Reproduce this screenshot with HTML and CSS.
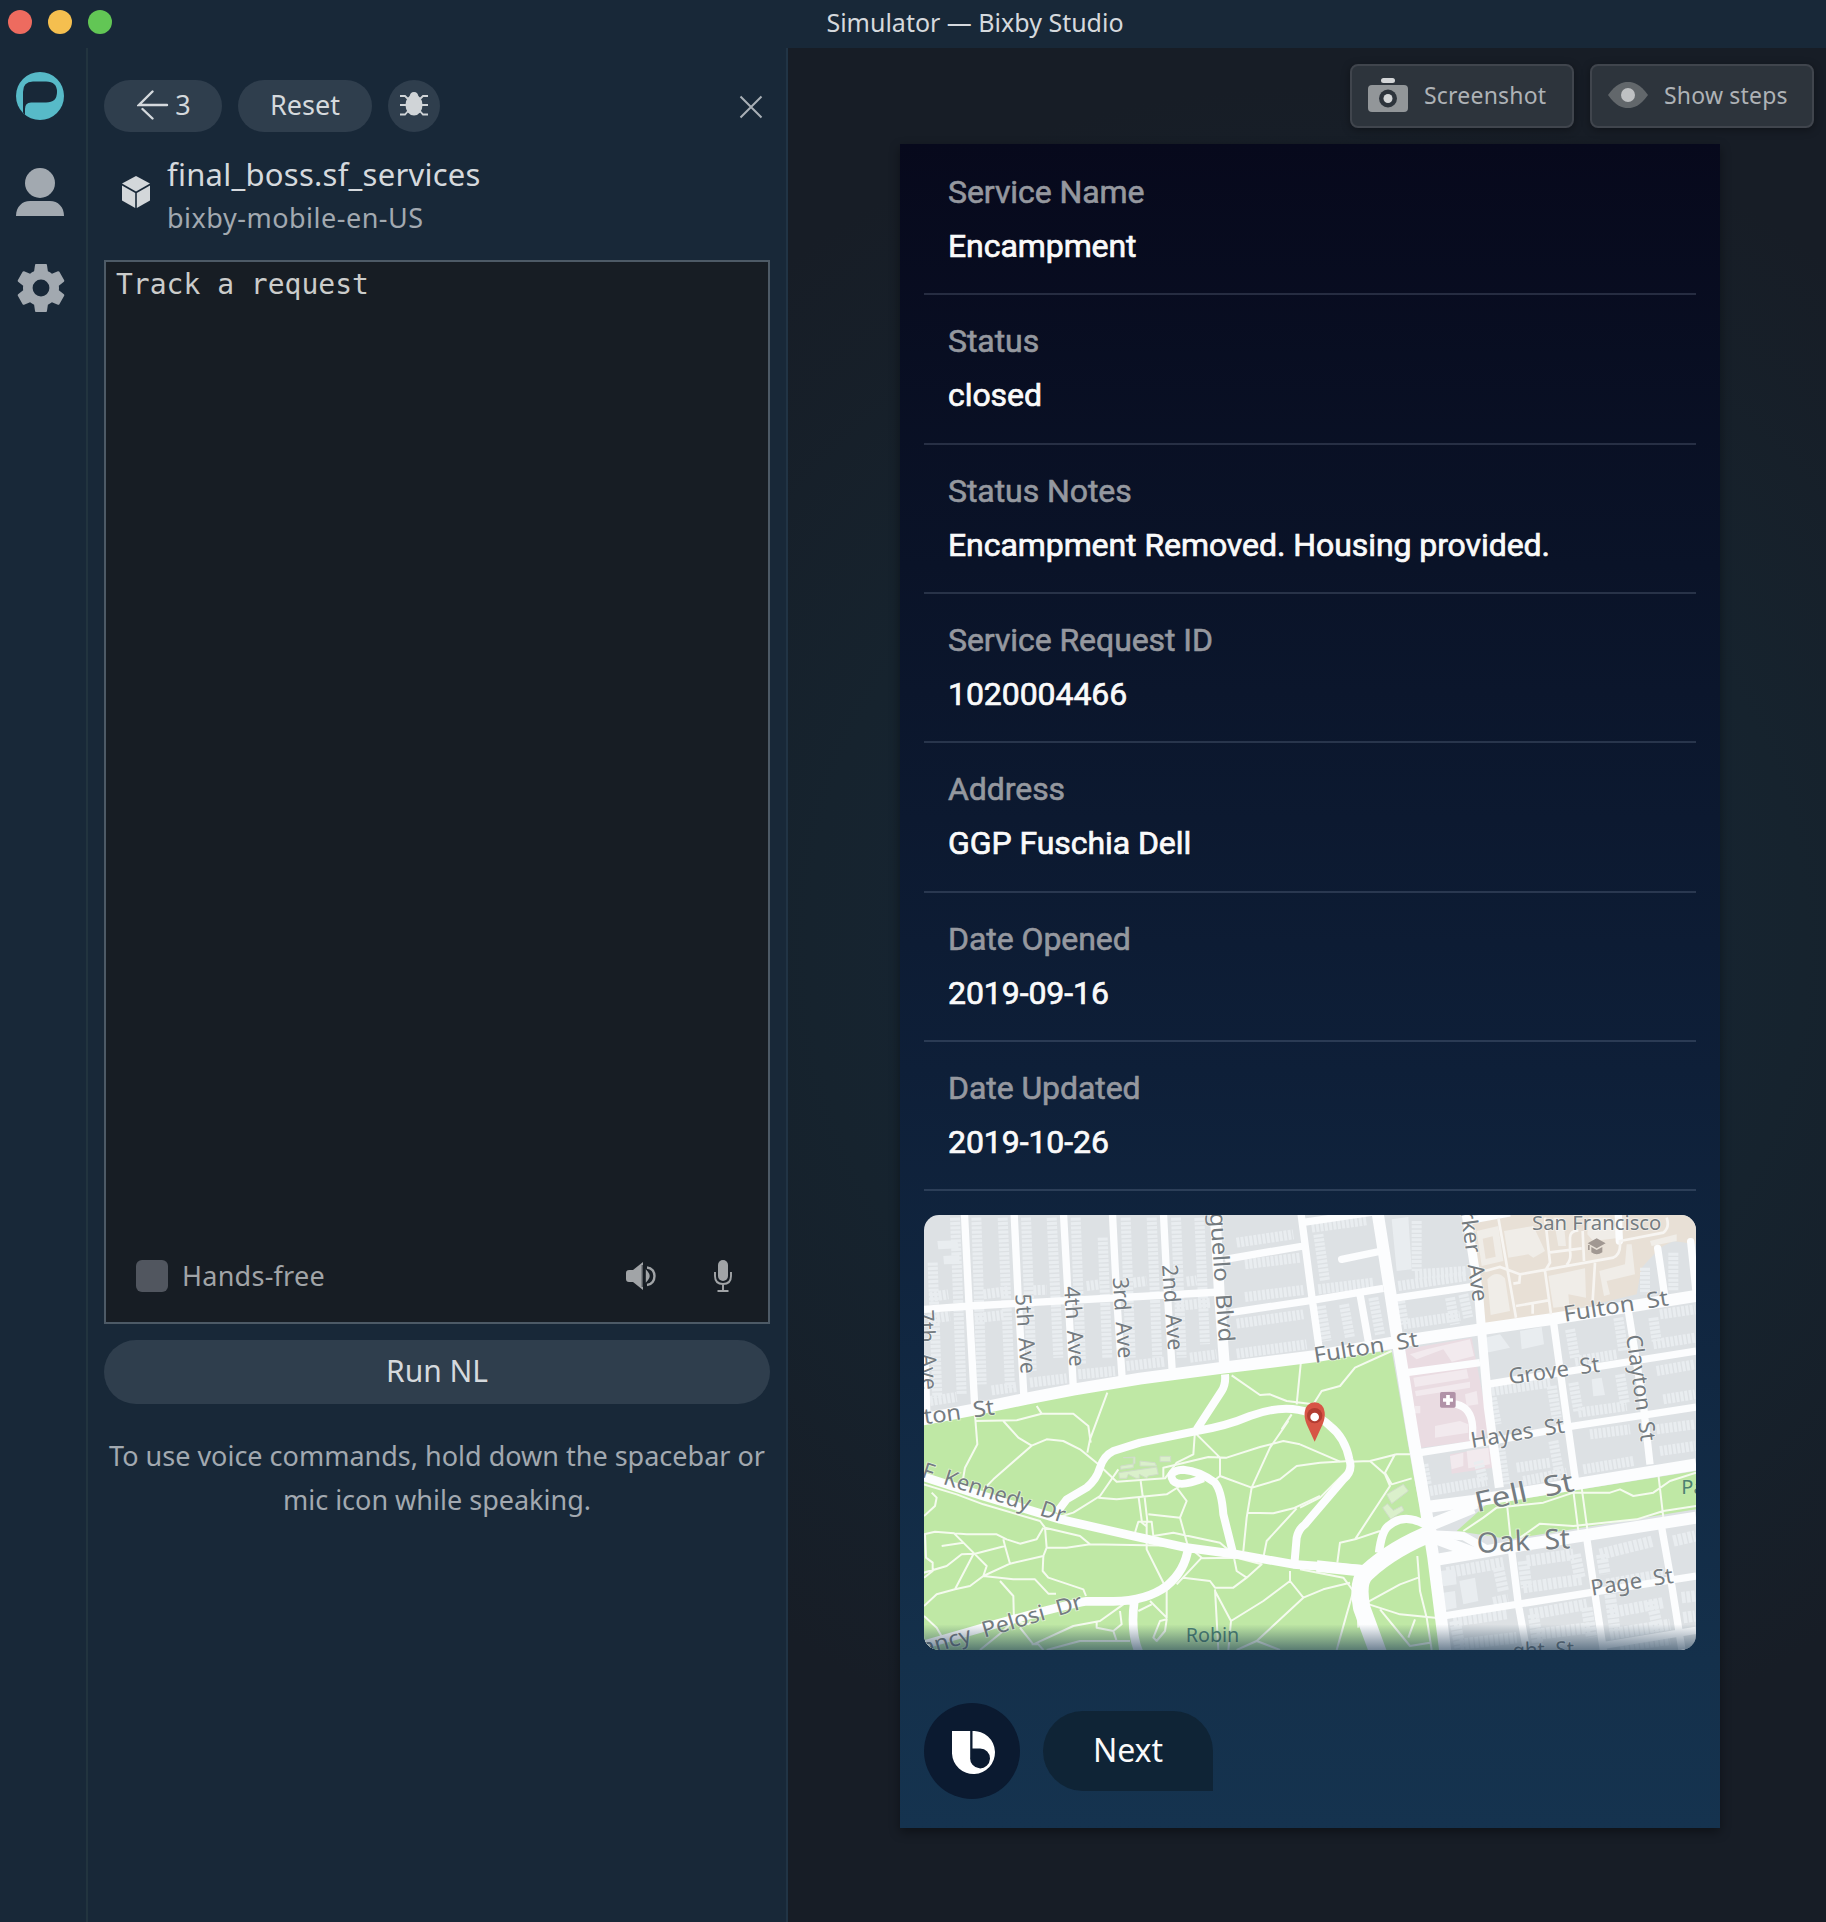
FILE: index.html
```html
<!DOCTYPE html>
<html lang="en">
<head>
<meta charset="utf-8">
<title>Simulator — Bixby Studio</title>
<link rel="stylesheet" href="styles.css">
</head>
<body>
<header class="titlebar">
  <div class="lights"><i class="light red"></i><i class="light yellow"></i><i class="light green"></i></div>
  <h1 class="window-title">Simulator — Bixby Studio</h1>
</header>
<main class="workspace">
  <nav class="rail">
    <svg class="rail-icon" viewBox="0 0 48 48"><circle cx="24" cy="24" r="24" fill="#57bac8"/><path d="M7 40.500V20Q7 9.500 17 9.500H30Q41 9.500 41 20Q41 30.500 30 30.500H15Q9 30.500 9 37V43Z" fill="#182838"/></svg>
    <svg class="rail-icon" viewBox="0 0 48 48"><circle cx="24" cy="15" r="15" fill="#a2a9b0"/><path d="M0 48C0 39 6 33 14 33H34C42 33 48 39 48 48Z" fill="#a2a9b0"/></svg>
    <svg class="rail-icon gear" viewBox="2 2 20 20"><path fill="#a2a9b0" d="M19.430 12.980c.04-.32.07-.64.07-.98s-.03-.66-.07-.98l2.110-1.650c.19-.15.24-.42.12-.64l-2-3.460c-.12-.22-.39-.3-.61-.22l-2.490 1c-.52-.4-1.080-.73-1.690-.98l-.38-2.650C14.460 2.180 14.250 2 14 2h-4c-.25 0-.46.18-.49.42l-.38 2.650c-.61.25-1.170.59-1.690.98l-2.490-1c-.23-.09-.49 0-.61.22l-2 3.460c-.13.22-.07.49.12.64l2.110 1.650c-.04.32-.07.65-.07.98s.03.66.07.98l-2.110 1.650c-.19.15-.24.42-.12.64l2 3.460c.12.22.39.3.61.22l2.490-1c.52.4 1.080.73 1.690.98l.38 2.650c.03.24.24.42.49.42h4c.25 0 .46-.18.49-.42l.38-2.650c.61-.25 1.170-.59 1.690-.98l2.490 1c.23.09.49 0 .61-.22l2-3.460c.12-.22.07-.49-.12-.64zM12 15.500A3.500 3.500 0 1 1 12 8.500a3.500 3.500 0 0 1 0 7z"/></svg>
  </nav>

  <section class="panel">
    <div class="toolbar">
      <button class="pill back"><svg width="32" height="30" viewBox="0 0 32 30" fill="none" stroke="#d5d9dd" stroke-width="2.400" stroke-linecap="round"><path d="M30 15H2L15.500 1.500M5.500 19L15.500 28.500"/></svg><span>3</span></button>
      <button class="pill reset"><span>Reset</span></button>
      <button class="pill bug"><svg width="28" height="26" viewBox="0 0 28 26"><path d="M0 5H5L9 9M0 14H9M0 23.500H5L9 19M28 5H23L19 9M28 14H19M28 23.500H23L19 19" fill="none" stroke="#d0d4d7" stroke-width="1.800"/><ellipse cx="14" cy="14" rx="8.500" ry="10.500" fill="#d0d4d7"/><path d="M9.500 6Q10 1 14 1T18.500 6Z" fill="#d0d4d7"/></svg></button>
      <button class="close"><svg width="24" height="24" viewBox="0 0 24 24" stroke="#a9b0b6" stroke-width="2"><path d="M1.500 1.500L22.500 22.500M22.500 1.500L1.500 22.500"/></svg></button>
    </div>
    <div class="capsule">
      <svg width="28" height="32" viewBox="0 0 28 32" fill="#d3d7da"><path d="M14 0L28 7.500L14 15.500L0 7.500Z"/><path d="M0 9.500L13.200 17V32L0 24.500Z"/><path d="M28 9.500L14.800 17V32L28 24.500Z"/></svg>
      <div>
        <div class="capsule-name">final_boss.sf_services</div>
        <div class="capsule-target">bixby-mobile-en-US</div>
      </div>
    </div>
    <div class="utterance">
      <div class="utterance-text">Track a request</div>
      <div class="utterance-bar">
        <i class="checkbox"></i><span class="hands">Hands-free</span>
        <svg class="speaker" width="31" height="28" viewBox="0 0 31 28"><path d="M0 11Q0 8 3 8H7L17 0V28L7 20H3Q0 20 0 17Z" fill="#a1a4a7"/><path d="M16.200 3V25" stroke="#33383e"/><path d="M21 10.500Q24 14 21 17.500ZM21 5.500C31 6 31 22 21 23" fill="none" stroke="#a1a4a7" stroke-width="2.400"/></svg>
        <svg class="mic" width="18" height="32" viewBox="0 0 18 32"><rect x="4" width="10" height="21" rx="5" fill="#a1a4a7"/><path d="M1 12V16Q1 24 9 24T17 16V12M9 24V31M3.500 31H14.500" fill="none" stroke="#a1a4a7" stroke-width="1.900"/></svg>
      </div>
    </div>
    <button class="pill run"><span>Run NL</span></button>
    <p class="hint">To use voice commands, hold down the spacebar or<br>mic icon while speaking.</p>
  </section>

  <section class="stage">
    <div class="actions">
      <button class="action"><svg width="40" height="34" viewBox="0 0 40 34"><rect x="13" y="0" width="14" height="5" rx="2.500" fill="#d3d5d7"/><rect y="7" width="40" height="27" rx="4" fill="#929699"/><circle cx="20" cy="20.500" r="9" fill="#2d343c"/><circle cx="20" cy="20.500" r="4.500" fill="#d3d5d7"/></svg><span>Screenshot</span></button>
      <button class="action"><svg class="eye" width="40" height="34" viewBox="0 0 40 34"><path d="M0 17C8 6 14 4 20 4S32 6 40 17C32 28 26 30 20 30S8 28 0 17Z" fill="#62676b"/><circle cx="20" cy="17" r="7" fill="#bfc1c3"/></svg><span>Show steps</span></button>
    </div>
    <article class="device">
      <dl class="rows">
        <div class="row"><dt>Service Name</dt><dd>Encampment</dd></div>
        <div class="row"><dt>Status</dt><dd>closed</dd></div>
        <div class="row"><dt>Status Notes</dt><dd>Encampment Removed. Housing provided.</dd></div>
        <div class="row"><dt>Service Request ID</dt><dd>1020004466</dd></div>
        <div class="row"><dt>Address</dt><dd>GGP Fuschia Dell</dd></div>
        <div class="row"><dt>Date Opened</dt><dd>2019-09-16</dd></div>
        <div class="row"><dt>Date Updated</dt><dd>2019-10-26</dd></div>
      </dl>
      <svg class="map" viewBox="72 72 2316 1305" preserveAspectRatio="none">
        <defs><linearGradient id="fade" x1="0" y1="0" x2="0" y2="1"><stop offset="0" stop-color="#15334f" stop-opacity="0"/><stop offset="1" stop-color="#15334f" stop-opacity=".6"/></linearGradient></defs>
        <rect x="72" y="72" width="2316" height="1305" fill="#dde1e4"/>
        <!-- campus and hospital grounds -->
        <path fill="#e8e0d6" d="M1700 95L1830 72H2388V160L2320 150L2280 170L2225 230L2210 310L1960 370L1755 400Z"/>
        <path fill="#f0ede8" d="M1730 120L1795 105L1810 210L1745 225ZM1812 120L1900 105L1935 180L1900 200L1885 190L1825 200ZM1960 80L1990 80L1998 165L1975 165ZM2065 80H2130L2160 140L2080 150L2062 130ZM1762 265Q1790 235 1815 262L1830 360L1772 372ZM1945 255L2055 232L2058 320L2005 310L2008 345L1960 350ZM2098 240L2175 220L2180 160L2195 160L2205 250L2120 270L2130 310L2112 315ZM2250 150L2330 130V150L2255 165Z"/>
        <path fill="#e8e0d6" d="M1748 143L1778 136L1787 197L1757 204Z"/>
        <path fill="#eadce2" d="M1515 475L1715 440L1765 700L1755 745L1555 772ZM1650 790L1770 770L1778 830L1655 848Z"/>
        <path fill="#f2eaee" d="M1580 475L1710 445L1722 495L1655 512L1630 475L1550 505L1530 490ZM1540 560L1700 535L1706 562L1545 588ZM1545 600L1710 572V590L1548 616ZM1695 610L1730 600L1735 640L1700 645ZM1605 705L1680 690L1705 700V725L1605 740ZM1545 645h16v22h-18ZM1650 795L1690 785V825L1655 835ZM1700 780L1765 770L1770 820L1705 832Z"/>
        <!-- houses -->
        <g fill="none" stroke="#e9edf0" stroke-width="30" stroke-dasharray="9 4">
          <path d="M98 215L112 620M165 80L185 610M229 80L245 580M308 80L330 590M378 80L395 540M455 80L475 500M527 80L543 520M608 140L622 500M677 80L692 500M755 80L772 500M828 80L845 500M898 80L915 460"/>
          <path d="M90 318L145 310M250 310L325 300M400 298L440 296M560 285L600 280M700 275L740 270M860 272L890 268M85 385L150 375M225 382L310 372M830 345L930 335M390 575L500 562M535 550L645 540M680 525L795 512M870 500L950 490M275 598L350 588M90 630L170 618"/>
          <path d="M1010 155L1180 130M1035 220L1200 200M1035 318L1210 297M1010 398L1210 370M1010 488L1220 460M1235 110L1400 88M1255 295L1420 275M1495 285L1700 255M1510 400L1680 375M1255 130L1275 270M1262 345L1280 450M1332 340L1350 440M1420 320L1440 430M1500 330L1512 400M1650 320L1665 400M1690 310L1705 380"/>
          <path d="M1775 600L1950 575M2025 510L2150 490M2280 370L2385 355M2260 460L2385 440M2270 540L2385 520M2290 625L2385 610M2035 665L2180 645M1775 620L1790 700M1955 585L1970 680M2010 415L2025 500M2155 380L2170 480M2020 575L2035 660M2160 550L2175 640M2260 380L2270 450"/>
          <path d="M1590 900L1760 870M1735 810L1750 870M1570 820L1580 880M1800 770L1815 880M1960 750L1980 860M1850 830L1950 815M2070 730L2190 715M2050 835L2200 810M2270 715L2385 700M2280 780L2385 765M1870 870L2000 845"/>
          <path d="M2320 185V300M2235 230V310M1550 90V240M1545 250L1700 240"/>
        </g>
        <g fill="none" stroke="#e9edf0" stroke-width="34" stroke-dasharray="11 4">
          <path d="M1640 1145L1810 1115M1780 1235L1825 1225M1880 1110L2020 1090M1870 1190L2045 1165M1660 1290L1820 1268M1890 1270L2060 1240M2100 1090L2260 1050M2120 1180L2290 1150M2320 1050L2385 1035M2130 1265L2290 1235M2130 1330L2310 1300M2345 1220L2385 1215M2350 1280L2385 1275M1680 1360L1850 1340M1910 1330L2070 1310M2160 1365L2310 1345"/>
          <path d="M1795 1130L1810 1200M1870 1110L1880 1190M2025 1090L2040 1160M2105 1090L2115 1150M1665 1290L1680 1370M1900 1270L1915 1370M2060 1250L2075 1340M2130 1210L2145 1320M2255 1230L2275 1320"/>
        </g>
        <path fill="#e9edf0" d="M112 150L172 148L176 172L115 175ZM130 195L178 192V218L132 220ZM1475 85L1525 78L1535 235L1490 240ZM1755 440L1800 430L1830 470L1760 485ZM1860 420L1925 408L1932 460L1865 475ZM2075 565L2105 560L2115 612L2080 616ZM1620 1140L1665 1135L1670 1180L1630 1186ZM1678 1170L1725 1160L1735 1230L1690 1240ZM1630 1205L1665 1200L1670 1250L1635 1258Z"/>
        <!-- parkland -->
        <path fill="#bfe8a5" d="M72 695L225 665L520 605L970 545L1475 478L1540 850L1590 1100L1640 1377H72ZM1670 1020L1760 940L2388 840V955L1830 1045Z"/>
        <path fill="#daf0cb" stroke="#cfdcc8" stroke-width="3" d="M670 800L705 798V818L662 825V835L700 830V800ZM656 845L770 828L775 850L745 855L740 862L718 850V862H708L685 850L680 862H658ZM720 810L765 815L770 825H720ZM780 796H812V812H780ZM1460 910L1510 880L1525 900L1475 938ZM1448 950L1462 938L1480 958L1505 945L1512 958L1472 985Z"/>
        <!-- footpaths -->
        <g fill="none" stroke="#f5fbef" stroke-width="6" stroke-linejoin="round">
          <path d="M225 672L232 760L195 830L188 870M225 690L350 688L425 668H520L565 705L572 755M410 645L425 668M310 690L355 740L395 764L440 745L490 750L540 775L595 820L650 872L795 862L830 815L880 790L885 720M395 764L280 865L250 895M622 605L570 745L562 785"/>
          <path d="M655 835L600 915L520 965L470 980M595 920L650 925L800 910L840 885M722 870L728 915M716 920L726 995L738 1005L742 990L734 920M740 1000V1075L795 1185M890 730L960 800V855L940 870M790 860V830L925 798L980 800L1080 768L1150 750L1200 760M960 855L1055 890L1140 865L1190 825L1260 815L1350 810M1165 690L1110 770L1055 890L1040 980L1030 1080M1040 965L1120 967L1180 952L1260 915M1190 952L1100 1050L1090 1100"/>
          <path d="M995 553L1080 612L1110 610L1160 630L1240 640M1203 510L1190 640M1475 480L1365 530L1320 585L1265 600L1240 640M1175 670L1145 715M1350 812L1410 810L1490 790H1530M1200 760L1320 812M1410 810L1455 850L1470 885L1365 1045L1320 1055L1312 1115M1535 862L1475 880L1455 845L1485 790M1340 840L1260 920L1200 950M1365 1045L1440 1020"/>
          <path d="M72 880L170 910L250 940L420 990L435 1010L540 1035L570 1060L860 1065M72 975L105 945L110 920L95 905M72 1030L105 1022L200 1030H290L320 1045L360 1058L410 1045L430 1010M435 1010L440 1070H500L570 1060M160 1025L220 1085L260 1125L250 1155L340 1165H405L445 1208H468M125 1065L190 1055M72 1145L140 1125L185 1090L225 1088L315 1065L310 1045M315 1065L330 1118L430 1095L440 1070M330 1118L250 1155L210 1185L165 1195M220 1090L165 1195L110 1210L72 1245M75 1030L78 1100L98 1115V1140L72 1160"/>
          <path d="M430 1095L428 1140L445 1160L550 1195L558 1215M300 1170L340 1215L342 1290M72 1275L110 1310L130 1345M240 1377L310 1320L340 1290L385 1300L395 1290M360 1310L400 1360L520 1305L600 1290L670 1240M395 1360H415L430 1377M440 1377L540 1350H690M590 1290V1310L640 1320L665 1300L660 1260M640 1320L650 1350M705 1025L715 992H755L760 1035L820 1025L960 1055L1000 1090M745 970L840 980L865 1070M830 890L860 930L840 980M870 1070L905 1100L830 1180M900 1102L1010 1100L1085 1120L1040 1160L1000 1190H945L930 1170L850 1160M750 1230L800 1280V1190M715 1260L755 1240M760 1340L780 1290L800 1285L795 1320L770 1350ZM945 1195L955 1377M945 1200L993 1290L985 1377M993 1290L1090 1230L1170 1170L1210 1220L1070 1350L1010 1377M1070 1350L1140 1377M1170 1140V1170M1210 1220L1270 1195L1350 1175M1000 1090L1010 1140L1040 1160"/>
          <path d="M1200 1135L1330 1160L1360 1200L1340 1270L1310 1377M1370 1220L1375 1310M1400 1235L1500 1180L1555 1160M1552 1095L1560 1200L1580 1280L1595 1377M1400 1238L1500 1270L1620 1282M1440 1255L1530 1365L1590 1355M1525 1340L1545 1285M1690 1020L1750 980L1790 950L1930 935L2020 905L2130 905L2160 895L2200 915L2260 905L2310 870L2388 845M1860 1040L1920 998L2020 1005L2210 985L2290 960L2388 945M1820 930L1832 1045M2020 900L2035 1020M2045 890L2062 1015M2275 850L2290 980"/>
        </g>
        <!-- streets -->
        <g fill="none" stroke="#fcfdfe" stroke-width="22" stroke-linejoin="round">
          <path d="M193 60L207 340L225 660M342 60L355 330L372 620M490 60L505 330L520 590M637 60L650 320L667 570M790 60L803 320L817 545M72 355L210 345L960 303M975 205L1210 165M990 365L1235 328L1450 292M1202 60L1236 320L1260 490M1205 95L1440 60M1380 310L1405 450M1480 322L1730 285M1700 90L1830 66"/>
          <path d="M1520 545L1740 515M1760 580L2388 480M1560 785L1780 750L2020 705L2388 648M1960 390L2000 680L2028 880M2185 360L2230 640L2250 820M1835 1080L1855 1240L1882 1390M2060 1040L2085 1210L2112 1390M2285 1010L2310 1150L2348 1390M1630 1275L2070 1205L2388 1155M2100 1365L2388 1318M75 500L80 660"/>
          <path stroke-linecap="round" d="M1325 205L1445 180M2273 172L2295 320M2372 152L2388 300M2155 72L2158 150M1670 640Q1715 650 1718 710V740"/>
          <path stroke-width="32" d="M945 60L958 310L975 545"/>
          <path stroke-width="27" d="M1697 60L1735 300L1745 420L1765 650L1798 890"/>
          <path stroke-width="36" d="M60 687L225 655L380 623L520 596L720 563L970 530L1250 495L1490 453L1740 415L1950 385L2388 315M1580 948L1720 930L1890 902L2388 820M1600 1108L1850 1065L2388 980M1432 60L1470 300L1490 430L1540 740L1575 940L1600 1100L1637 1390"/>
          <path d="M975 550Q978 580 965 600L890 715M1183 1120L1190 1040Q1195 1015 1215 1000L1330 865Q1360 840 1348 805Q1335 740 1290 705Q1200 620 1050 675Q980 705 890 720L720 755L640 780Q610 795 600 830T560 890L500 925L470 965M1000 1090L970 970Q965 900 945 875Q900 840 850 836Q800 840 820 870Q840 890 910 862" stroke-width="24"/>
          <path stroke-width="26" d="M72 858L250 915L480 985L700 1035L860 1070L1010 1090L1180 1120L1390 1135M865 1070Q855 1140 800 1185Q740 1230 640 1231H560Q500 1240 250 1310L60 1365M703 1230Q690 1330 720 1390"/>
          <path stroke-width="25" d="M1437 1085Q1445 1020 1465 1005Q1510 965 1575 1000M1580 1000L1730 940M1590 1030L1690 1035L1760 1075"/>
          <path stroke-width="52" d="M1440 1400L1385 1250Q1370 1170 1400 1145Q1480 1070 1610 1020"/>
          <path stroke-width="34" d="M1250 1125L1390 1140L1480 1090M1600 1000L1720 950M1600 1040L1720 1085"/>
        </g>
        <g fill="none" stroke="#f7f5f2" stroke-width="8">
          <path d="M1795 80L1848 380M1935 80L1950 215L1935 240L1953 370M1755 240L1800 228L1860 250L1858 275L1840 278M1860 250L2140 200Q2160 190 2160 165V150L2290 125Q2310 110 2300 80M1945 185L2045 172M2048 120L2052 210M2000 222Q2015 205 2010 180V140Q2010 120 2035 118M2085 215L2078 330M1848 345L1945 328M1898 340V368"/>
        </g>
        <!-- place symbols -->
        <path fill="#a19892" d="M2063 157L2090 142L2117 157L2090 172ZM2074 168L2090 177L2107 168V184Q2090 196 2074 184ZM2064 162h5v15h-5Z"/>
        <rect x="1620" y="603" width="47" height="47" rx="5" fill="#b193a8"/>
        <path d="M1644 612V642M1629 627H1659" stroke="#fff" stroke-width="11"/>
        <!-- labels -->
        <g class="map-label" font-size="66">
          <text transform="translate(346 310) rotate(86)" textLength="240" lengthAdjust="spacingAndGlyphs">5th &#160;Ave</text>
          <text transform="translate(492 287) rotate(86)" textLength="242" lengthAdjust="spacingAndGlyphs">4th &#160;Ave</text>
          <text transform="translate(638 260) rotate(86)" textLength="244" lengthAdjust="spacingAndGlyphs">3rd &#160;Ave</text>
          <text transform="translate(786 222) rotate(86)" textLength="258" lengthAdjust="spacingAndGlyphs">2nd &#160;Ave</text>
          <text transform="translate(54 358) rotate(87)" textLength="240" lengthAdjust="spacingAndGlyphs">7th &#160;Ave</text>
          <text transform="translate(930 66) rotate(86)" textLength="390" lengthAdjust="spacingAndGlyphs">guello &#160;Blvd</text>
          <text transform="translate(1681 62) rotate(82)" textLength="275" lengthAdjust="spacingAndGlyphs">rker &#160;Ave</text>
          <text transform="translate(2178 434) rotate(82)" textLength="322" lengthAdjust="spacingAndGlyphs">Clayton &#160;St</text>
          <text transform="translate(74 700) rotate(-8)" textLength="214" lengthAdjust="spacingAndGlyphs">ton &#160;St</text>
          <text transform="translate(1245 516) rotate(-9)" textLength="316" lengthAdjust="spacingAndGlyphs">Fulton &#160;St</text>
          <text transform="translate(1994 392) rotate(-9)" textLength="318" lengthAdjust="spacingAndGlyphs">Fulton &#160;St</text>
          <text transform="translate(1829 580) rotate(-8)" textLength="275" lengthAdjust="spacingAndGlyphs">Grove &#160;St</text>
          <text transform="translate(1716 771) rotate(-9.500)" textLength="284" lengthAdjust="spacingAndGlyphs">Hayes &#160;St</text>
          <text transform="translate(2076 1214) rotate(-9)" textLength="249" lengthAdjust="spacingAndGlyphs">Page &#160;St</text>
          <text transform="translate(1731 964) rotate(-12.500)" font-size="84" textLength="302" lengthAdjust="spacingAndGlyphs">Fell &#160;St</text>
          <text transform="translate(1732 1086) rotate(-3)" font-size="84" textLength="280" lengthAdjust="spacingAndGlyphs">Oak &#160;St</text>
          <text transform="translate(62 857) rotate(18)" textLength="448" lengthAdjust="spacingAndGlyphs">F &#160;Kennedy &#160;Dr</text>
          <text transform="translate(72 1394) rotate(-16.500)" textLength="500" lengthAdjust="spacingAndGlyphs">ancy &#160;Pelosi &#160;Dr</text>
          <text transform="translate(1838 1403) rotate(-2)" textLength="185" lengthAdjust="spacingAndGlyphs">ght &#160;St</text>
          <text x="1896" y="118" font-size="60" textLength="388" lengthAdjust="spacingAndGlyphs">San Francisco</text>
        </g>
        <g class="map-label park" font-size="60">
          <text x="857" y="1352" textLength="161" lengthAdjust="spacingAndGlyphs">Robin</text>
          <text x="2344" y="908">Pa</text>
        </g>
        <rect x="72" y="1300" width="2316" height="77" fill="url(#fade)"/>
        <path fill="#d75546" d="M1244 752L1220 700Q1212 680 1214 664A30 30 0 0 1 1274 664Q1276 680 1268 700Z"/>
        <circle cx="1244" cy="674" r="23" fill="#b23c31"/><circle cx="1244" cy="678" r="13" fill="#fff"/>
      </svg>
      <footer class="device-foot">
        <span class="bixby"><svg width="43" height="43" viewBox="0 0 130 130"><path fill="#fff" fill-rule="evenodd" d="M0 0H55V80A30 30 0 1 0 85 53H62V0A65 65 0 1 1 0 68Z"/></svg></span>
        <button class="next">Next</button>
      </footer>
    </article>
  </section>
</main>
</body>
</html>
```
FILE: styles.css
```css
* { box-sizing: border-box; }
body {
  margin: 0;
  width: 1826px;
  height: 1922px;
  display: flex;
  flex-direction: column;
  background: #182838;
  color: #d5d9dd;
  font-family: "Noto Sans", "Open Sans", sans-serif;
  overflow: hidden;
}
button { border: 0; padding: 0; font: inherit; color: inherit; background: none; }
svg { display: block; flex: none; }
button, .window-title, .hint, .hands { white-space: nowrap; }

.titlebar {
  height: 48px;
  flex: none;
  display: grid;
  grid-template-columns: 1fr auto 1fr;
  align-items: center;
  padding: 0 8px 4px;
}
.lights { display: flex; gap: 16px; }
.light { width: 24px; height: 24px; border-radius: 50%; }
.red { background: #ed6b5f; }
.yellow { background: #f5bf4f; }
.green { background: #62c655; }
.window-title {
  grid-column: 2;
  margin: 0 -44px 0 80px;
  font-size: 25px;
  font-weight: 400;
  line-height: 44px;
}

.workspace { flex: 1; display: flex; min-height: 0; }
.rail {
  width: 88px;
  flex: none;
  display: flex;
  flex-direction: column;
  gap: 48px;
  padding: 24px 0 0 16px;
  border-right: 2px solid #22343f;
}
.rail-icon { width: 48px; height: 48px; }
.gear { margin-left: 1px; }

.panel {
  width: 700px;
  flex: none;
  display: flex;
  flex-direction: column;
  padding: 32px 16px 0;
  border-right: 2px solid #213445;
}
.toolbar { display: flex; gap: 16px; height: 52px; }
.pill {
  display: flex;
  align-items: center;
  justify-content: center;
  border-radius: 32px;
  background: #2f3e4d;
  font-size: 27px;
}
.back, .reset { padding-bottom: 3px; }
.back { width: 118px; gap: 6px; padding-left: 2px; }
.reset { width: 134px; }
.bug { width: 52px; padding-bottom: 5px; }
.close { margin: 1px 7px 0 auto; }
.capsule {
  display: flex;
  align-items: center;
  gap: 17px;
  height: 88px;
  margin: 20px 0;
  padding-left: 18px;
}
.capsule > svg { margin-top: -8px; }
.capsule-name { font-size: 31px; line-height: 44px; letter-spacing: .25px; }
.capsule-target { font-size: 27px; line-height: 44px; letter-spacing: .5px; color: #a2a9b0; }

.utterance {
  height: 1064px;
  display: flex;
  flex-direction: column;
  justify-content: space-between;
  border: 2px solid #4d5a66;
  background: #171d24;
}
.utterance-text {
  padding: 6px 10px;
  font: 28px/34px "DejaVu Sans Mono", monospace;
  color: #cbcccb;
}
.utterance-bar {
  display: flex;
  align-items: center;
  padding: 0 36px 30px 30px;
  font-size: 27px;
  line-height: 32px;
  color: #a1a4a7;
}
.checkbox { width: 32px; height: 32px; border-radius: 6px; background: #51565f; }
.hands { margin-left: 14px; letter-spacing: .25px; }
.speaker { margin-left: auto; }
.mic { margin-left: 57px; }
.run { height: 64px; margin-top: 16px; font-size: 30px; padding-bottom: 3px; }
.hint {
  margin: 30px -10px 0;
  font-size: 27px;
  line-height: 44px;
  text-align: center;
  color: #a2a9b0;
}

.stage {
  flex: 1;
  display: flex;
  flex-direction: column;
  padding: 16px 12px 0 112px;
  background: radial-gradient(circle at 50% 48%, #17283a 0, #16232e 45%, #171d26 78%);
}
.actions { display: flex; justify-content: flex-end; gap: 16px; }
.action {
  width: 224px;
  height: 64px;
  display: flex;
  align-items: center;
  gap: 16px;
  padding: 0 0 2px 16px;
  border: 2px solid #40454d;
  border-radius: 8px;
  background: #2d343c;
  box-shadow: 0 2px 8px rgba(0, 0, 0, .35);
  color: #aeb2b6;
  font-size: 23px;
  letter-spacing: .2px;
}
.device {
  width: 820px;
  height: 1684px;
  margin-top: 16px;
  padding: 2px 24px 0;
  background: linear-gradient(#07091c 0, #0a1328 25%, #0e1f38 55%, #14304b 90%, #15334f 100%);
  box-shadow: 0 4px 10px rgba(0, 0, 0, .4);
}
.rows { margin: 0; font-family: Roboto, sans-serif; font-size: 32px; line-height: 54px; }
.row { height: 149.330px; padding: 19px 24px 0; border-bottom: 2px solid rgba(160, 175, 200, .2); white-space: nowrap; }
.row dt { color: #95989f; letter-spacing: -.07px; -webkit-text-stroke: .6px #95989f; }
.row dd { margin: 0; color: #fafafa; letter-spacing: -.07px; -webkit-text-stroke: .7px #fafafa; }
.map { width: 772px; height: 435px; margin-top: 24px; border-radius: 15px; }
.map-label { font-family: "Noto Sans", sans-serif; fill: #757c81; stroke: #fff; stroke-opacity: .5; stroke-width: 5px; paint-order: stroke; }
.park { fill: #4d8171; stroke: #c9ecb4; }
.device-foot { display: flex; align-items: center; gap: 23px; margin-top: 53px; }
.bixby {
  width: 96px;
  height: 96px;
  display: flex;
  align-items: center;
  justify-content: center;
  padding: 2px 0 0 3px;
  border-radius: 50%;
  background: #0b1a30;
}
.next {
  width: 170px;
  height: 80px;
  border-radius: 40px 40px 0 40px;
  background: #0f2436;
  color: #fafafa;
  font-size: 32px;
  padding-bottom: 4px;
}
```
